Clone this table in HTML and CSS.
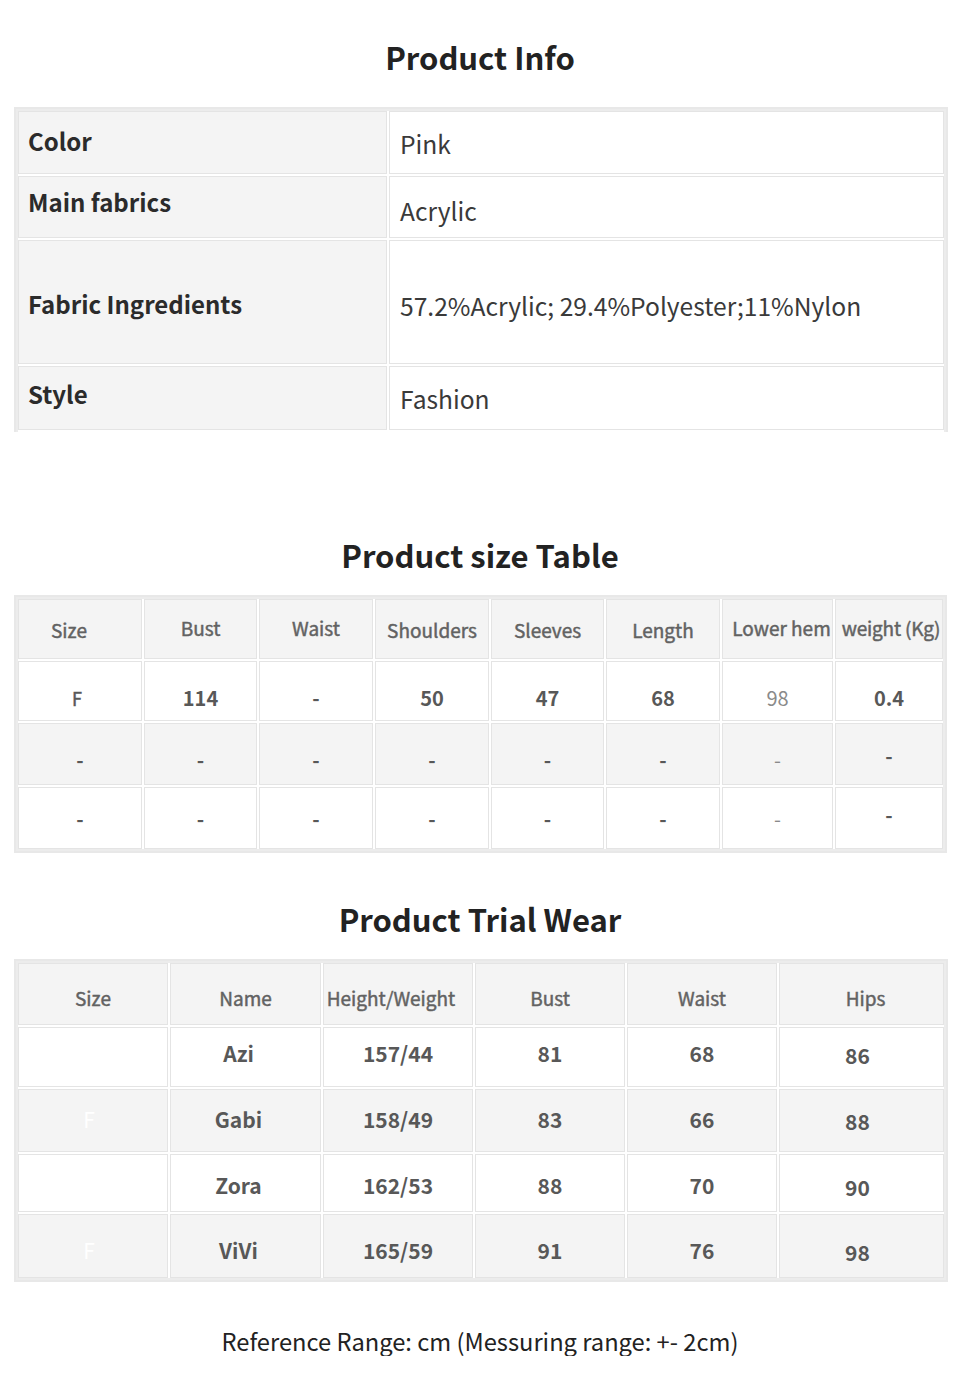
FILE: index.html
```html
<!DOCTYPE html>
<html lang="en">
<head>
	<meta charset="utf-8">
	<title>Product Info</title>
	<link rel="stylesheet" href="styles.css">
</head>
<body>

	<h2 class="title titleInfo">Product Info</h2>
	<table class="sheet infoTable">
		<colgroup><col style="width:369px"><col style="width:555px"></colgroup>
		<tr class="rowA">
			<td class="infoLabel padB2">Color</td>
			<td class="infoValue">Pink</td>
		</tr>
		<tr class="rowB">
			<td class="infoLabel padB10">Main fabrics</td>
			<td class="infoValue padT6">Acrylic</td>
		</tr>
		<tr class="rowC">
			<td class="infoLabel padT4">Fabric Ingredients</td>
			<td class="infoValue padT6">57.2%Acrylic; 29.4%Polyester;11%Nylon</td>
		</tr>
		<tr class="rowD">
			<td class="infoLabel padB4">Style</td>
			<td class="infoValue">Fashion</td>
		</tr>
	</table>

	<h2 class="title titleSize">Product size Table</h2>
	<table class="sheet sizeTable">
		<colgroup>
			<col style="width:124px"><col style="width:113px"><col style="width:114px"><col style="width:114px">
			<col style="width:113px"><col style="width:114px"><col style="width:111px"><col style="width:108px">
		</colgroup>
		<tr class="sizeHead">
			<td class="padRight">Size</td><td class="padB2">Bust</td><td class="padB2">Waist</td><td>Shoulders</td>
			<td>Sleeves</td><td>Length</td><td class="padB2 nudgeRight">Lower hem</td><td class="padB2 tight">weight (Kg)</td>
		</tr>
		<tr class="sizeRow1">
			<td class="thin">F</td><td>114</td><td>-</td><td>50</td>
			<td>47</td><td>68</td><td class="faint">98</td><td>0.4</td>
		</tr>
		<tr class="sizeRow2 grayRow">
			<td>-</td><td>-</td><td>-</td><td>-</td><td>-</td><td>-</td><td class="faint">-</td><td class="padB4">-</td>
		</tr>
		<tr class="sizeRow3">
			<td>-</td><td>-</td><td>-</td><td>-</td><td>-</td><td>-</td><td class="faint">-</td><td class="padB4">-</td>
		</tr>
	</table>

	<h2 class="title titleTrial">Product Trial Wear</h2>
	<table class="sheet trialTable">
		<colgroup>
			<col style="width:150px"><col style="width:151px"><col style="width:150px">
			<col style="width:150px"><col style="width:150px"><col style="width:165px">
		</colgroup>
		<tr class="trialHead">
			<td>Size</td><td>Name</td><td class="shiftLeft">Height/Weight</td><td>Bust</td><td>Waist</td><td class="nudgeRight">Hips</td>
		</tr>
		<tr class="trialRow1">
			<td class="ghost"></td><td class="shiftLeft">Azi</td><td>157/44</td><td>81</td><td>68</td><td class="hips">86</td>
		</tr>
		<tr class="trialRow2 grayRow">
			<td class="ghost">F</td><td class="shiftLeft">Gabi</td><td>158/49</td><td>83</td><td>66</td><td class="hips">88</td>
		</tr>
		<tr class="trialRow3">
			<td class="ghost"></td><td class="shiftLeft">Zora</td><td>162/53</td><td>88</td><td>70</td><td class="hips">90</td>
		</tr>
		<tr class="trialRow4 grayRow">
			<td class="ghost">F</td><td class="shiftLeft">ViVi</td><td>165/59</td><td>91</td><td>76</td><td class="hips">98</td>
		</tr>
	</table>

	<p class="note">Reference Range: cm (Messuring range: +- 2cm)</p>

</body>
</html>
```

FILE: styles.css
```css
html, body{ margin:0; padding:0; background:#fff; }
body{
	width:960px;
	font-family: "Noto Sans CJK SC", "Noto Sans", sans-serif;
	color:#333;
}

.title{
	margin:0;
	text-align:center;
	font-size:31px;
	line-height:40px;
	font-weight:700;
	color:#222;
}
.titleInfo{ padding-top:37px; margin-bottom:30px; }
.titleSize{ margin-top:103px; margin-bottom:20px; }
.titleTrial{ margin-top:46px; margin-bottom:20px; }

/* shared table frame: thin border plus a grey fill in the outer cell gap */
.sheet{
	width:933px;
	margin:0 0 0 14px;
	table-layout:fixed;
	border-collapse:separate;
	border-spacing:2px;
	border:2px solid #e8e8e8;
	background:#fff;
	box-shadow:inset 0 0 0 2px #ececec;
}
.sheet td{
	box-sizing:border-box;
	border:1px solid #e4e4e4;
	padding:0;
	overflow:hidden;
	white-space:nowrap;
	line-height:30px;
}
/* the info table is left open at the bottom */
.infoTable{ border-bottom:0; box-shadow:inset 2px 0 0 0 #ececec, inset -2px 0 0 0 #ececec, inset 0 2px 0 0 #ececec; }

/* product info */
.infoTable td{ padding-left:9px; }
.infoLabel{ background:#f4f4f4; font-size:24px; font-weight:700; color:#2b2b2b; }
.infoValue{ background:#fff; font-size:24.6px; color:#3a3a3a; padding-left:10px !important; }
.rowA td{ height:63px; }
.rowB td{ height:62px; }
.rowC td{ height:124px; }
.rowD td{ height:64px; }

/* vertical nudges, done with padding so the cell itself stays put */
.padB2{ padding-bottom:4px !important; }
.padB4{ padding-bottom:8px !important; }
.padB10{ padding-bottom:10px !important; }
.padT4{ padding-top:4px !important; }
.padT6{ padding-top:6px !important; }

/* size + trial tables */
.sizeTable td, .trialTable td{
	text-align:center;
	background:#fff;
	font-weight:700;
	color:#585858;
}
.sizeTable td{ font-size:20px; }
.trialTable td{ font-size:21px; }
.sizeHead td, .trialHead td{
	background:#f4f4f4 !important;
	font-size:19px !important;
	font-weight:400 !important;
	color:#626262 !important;
	-webkit-text-stroke:0.45px #626262;
}
.grayRow td{ background:#f4f4f4 !important; }

.sizeHead td{ height:60px; padding-top:2px; }
.sizeRow1 td{ height:60px; padding-top:14px; }
.sizeRow2 td{ height:62px; padding-top:12px; }
.sizeRow3 td{ height:62px; padding-top:2px; }
.padRight{ padding-right:22px !important; }
.tight{ letter-spacing:-0.2px; padding-left:4px !important; }

.trialHead td{ height:62px; padding-top:8px; }
.trialRow1 td{ height:60px; padding-bottom:9px; }
.trialRow2 td{ height:63px; padding-bottom:4px; }
.trialRow3 td{ height:58px; padding-top:3px; }
.trialRow4 td{ height:64px; padding-top:8px; }
.trialTable .hips{ padding-right:8px; }
.trialRow1 .hips{ padding-bottom:5px; }
.trialRow2 .hips{ padding-bottom:0; padding-top:0; }
.trialRow3 .hips{ padding-top:7px; }
.trialRow4 .hips{ padding-top:12px; }
.nudgeRight{ padding-left:8px !important; }

.thin{ font-weight:400 !important; font-size:18px !important; padding-right:6px !important; -webkit-text-stroke:0.45px #585858; }
.faint{ font-weight:400 !important; color:#8a8a8a !important; }
.ghost{ color:#fff !important; font-weight:400 !important; padding-right:8px !important; }
.shiftLeft{ padding-right:14px !important; }

.note{
	margin:44px 0 0 0;
	text-align:center;
	font-size:23.7px;
	line-height:30px;
	color:#222;
}
```
